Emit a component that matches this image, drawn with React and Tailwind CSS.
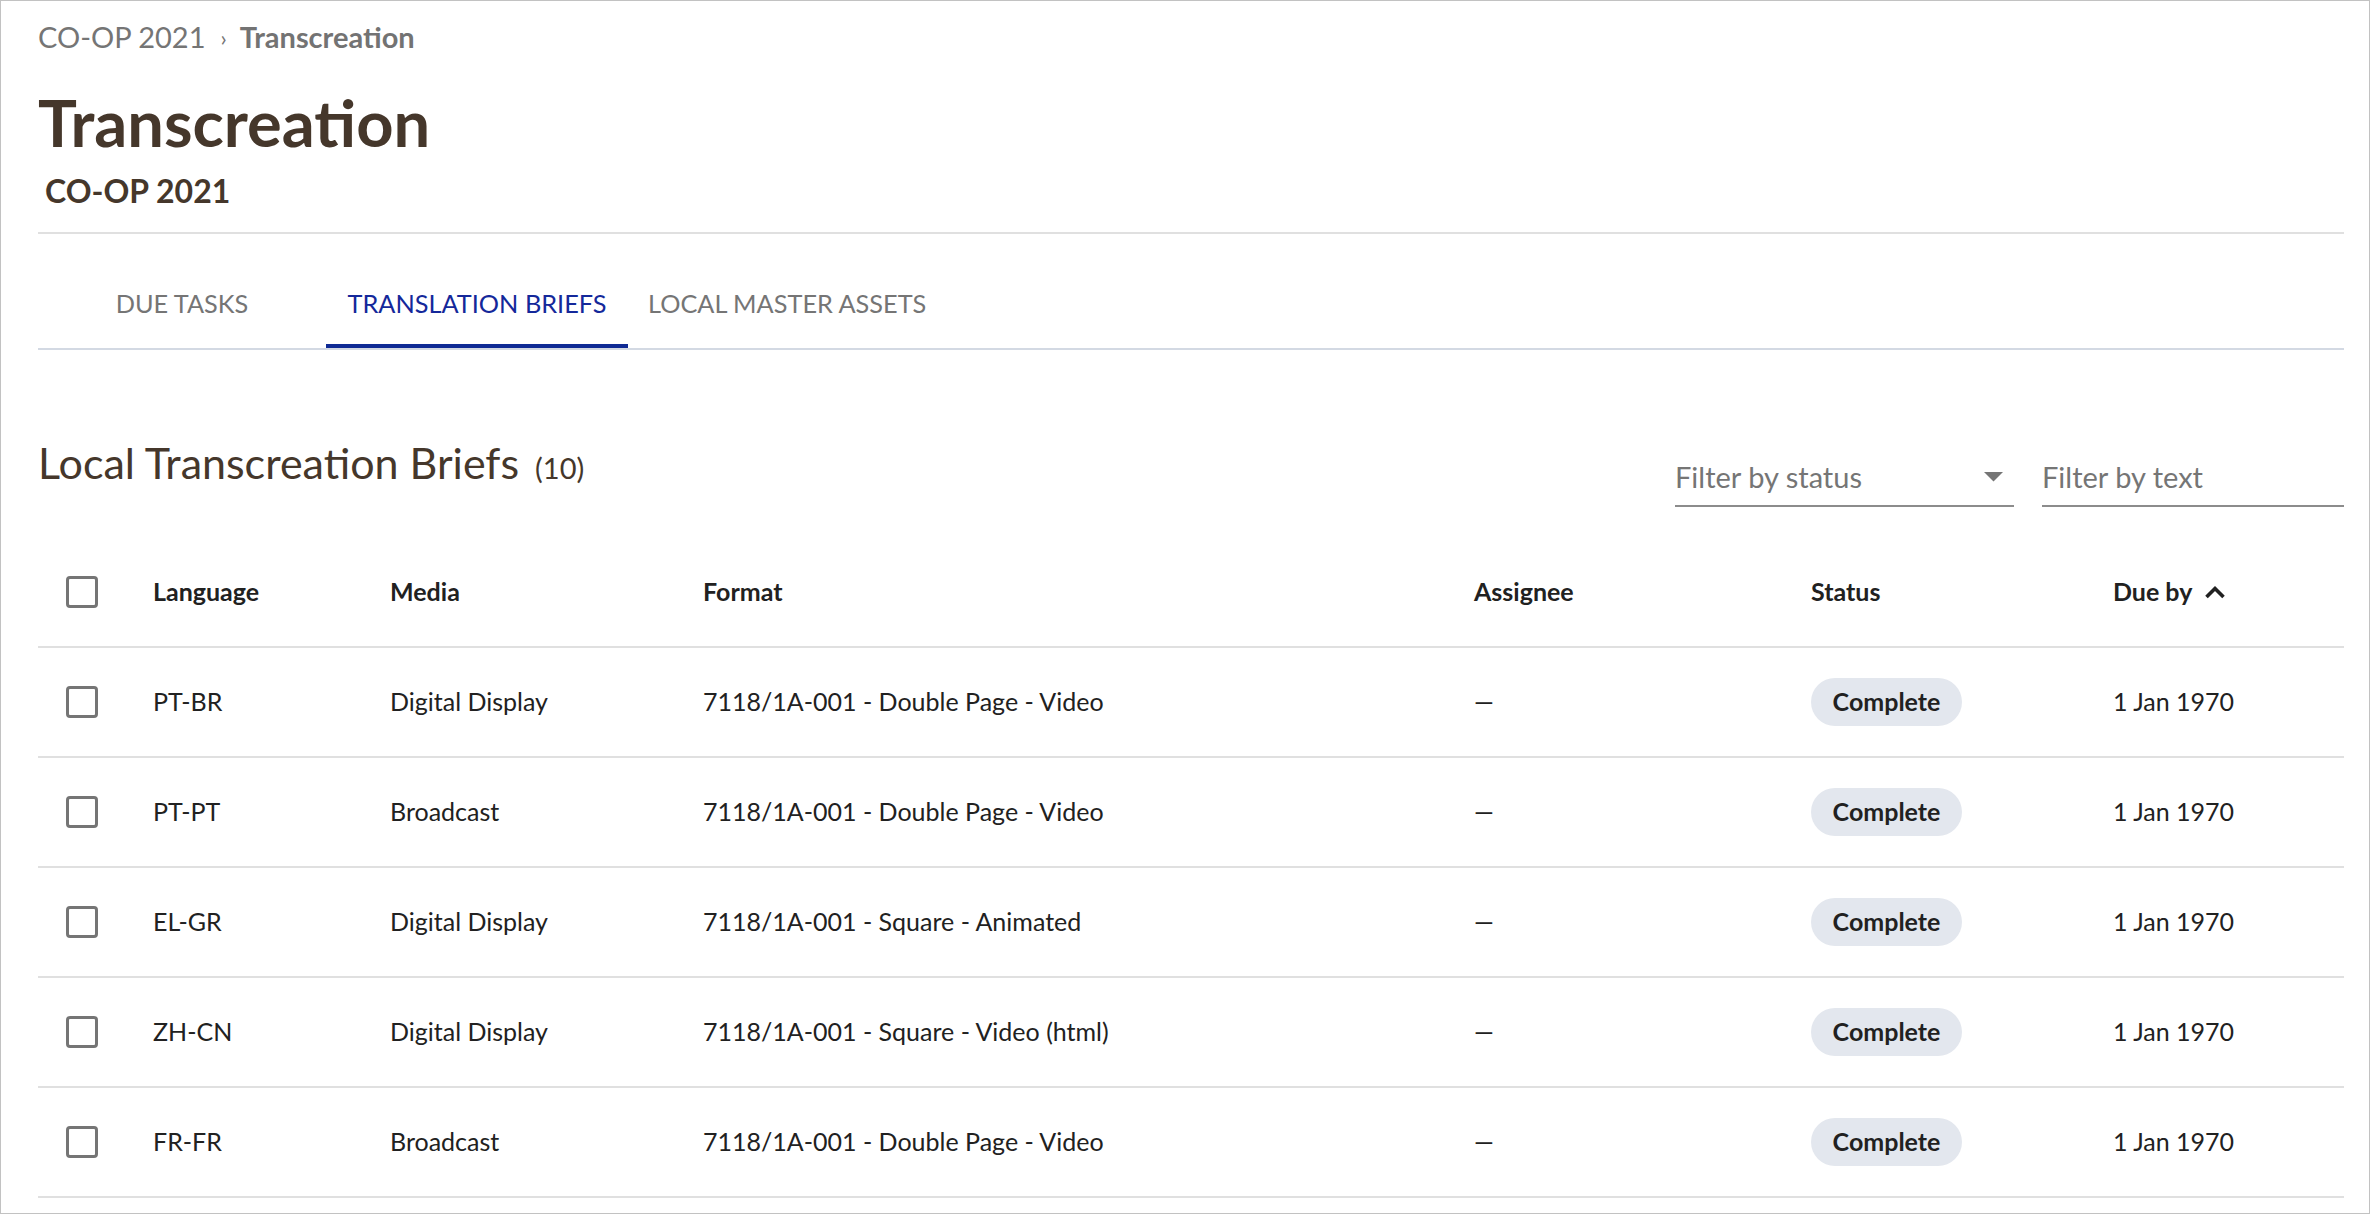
import React from "react";

const rows = [
  { lang: "PT-BR", media: "Digital Display", format: "7118/1A-001 - Double Page - Video" },
  { lang: "PT-PT", media: "Broadcast", format: "7118/1A-001 - Double Page - Video" },
  { lang: "EL-GR", media: "Digital Display", format: "7118/1A-001 - Square - Animated" },
  { lang: "ZH-CN", media: "Digital Display", format: "7118/1A-001 - Square - Video (html)" },
  { lang: "FR-FR", media: "Broadcast", format: "7118/1A-001 - Double Page - Video" },
];

const grid = "grid grid-cols-[115px_237px_313px_771px_337px_302px_230px] items-center";

function Checkbox() {
  return <div className="ml-[28px] h-[32px] w-[32px] rounded-[4px] border-[3px] border-[#757575] box-border" />;
}

export default function App() {
  return (
    <div
      className="h-[1214px] w-full box-border overflow-hidden border border-[#c2c2c2] bg-white pl-[37px] pr-[25px]"
      style={{ fontFamily: "Lato, 'Open Sans', sans-serif" }}
    >
      {/* Breadcrumb */}
      <div className="mt-[16px] flex h-[40px] items-center text-[29px] text-[#757575]">
        <span>CO-OP 2021</span>
        <span className="ml-[15px] mr-[13px] text-[22px]">›</span>
        <span className="font-bold text-[#737373]">Transcreation</span>
      </div>

      {/* Title */}
      <h1 className="mt-[33px] h-[65px] text-[65px] font-bold leading-none text-[#45372b]">
        Transcreation
      </h1>
      <div className="ml-[7px] mt-[20px] h-[32px] text-[32px] font-bold leading-none text-[#45372b]">
        CO-OP 2021
      </div>

      <div className="mt-[25px] h-[2px] bg-[#e0e0e0]" />

      {/* Tabs */}
      <div className="mt-[26px] flex border-b-2 border-[#d3d9e3]">
        <div className="relative flex h-[88px] w-[288px] items-center justify-center text-[25.3px] uppercase text-[#757575]">
          Due Tasks
        </div>
        <div className="relative flex h-[88px] w-[302px] items-center justify-center text-[25.3px] uppercase text-[#14289a]">
          Translation Briefs
          <div className="absolute bottom-0 left-0 right-0 h-[4px] bg-[#0f2a94]" />
        </div>
        <div className="relative flex h-[88px] items-center px-[20px] text-[25.3px] uppercase text-[#757575]">
          Local Master Assets
        </div>
      </div>

      {/* Section header */}
      <div className="mt-[91px] flex items-start justify-between">
        <div className="flex h-[43px] items-baseline leading-none text-[#45372b]">
          <span className="text-[43px]">Local Transcreation Briefs</span>
          <span className="ml-[16px] text-[29px]">(10)</span>
        </div>
        <div className="mt-[21px] flex items-start">
          <div className="flex w-[339px] items-center justify-between border-b-2 border-[#8c8c8c] pb-[14px]">
            <span className="h-[29px] text-[29px] leading-none text-[#757575]">Filter by status</span>
            <svg width="19" height="10" viewBox="0 0 19 10" className="mr-[11px]">
              <path d="M0 0 L19 0 L9.5 9.5 Z" fill="#757575" />
            </svg>
          </div>
          <div className="ml-[28px] w-[302px] border-b-2 border-[#8c8c8c] pb-[14px]">
            <span className="block h-[29px] text-[29px] leading-none text-[#757575]">Filter by text</span>
          </div>
        </div>
      </div>

      {/* Table */}
      <div className="mt-[31px] text-[25px] text-[#212121]">
        <div className={`${grid} h-[110px] border-b-2 border-[#e0e0e0] font-bold`}>
          <div><Checkbox /></div>
          <div>Language</div>
          <div>Media</div>
          <div>Format</div>
          <div>Assignee</div>
          <div>Status</div>
          <div className="flex items-center">
            Due by
            <svg width="22" height="14" viewBox="0 0 22 14" className="ml-[12px]">
              <path d="M2.5 12 L11 3.5 L19.5 12" fill="none" stroke="#212121" strokeWidth="3.6" />
            </svg>
          </div>
        </div>
        {rows.map((r, i) => (
          <div key={i} className={`${grid} h-[110px] border-b-2 border-[#e0e0e0]`}>
            <div><Checkbox /></div>
            <div>{r.lang}</div>
            <div>{r.media}</div>
            <div>{r.format}</div>
            <div>—</div>
            <div>
              <span className="flex h-[48px] w-[151px] items-center justify-center rounded-full bg-[#e3e7ee] font-bold">
                Complete
              </span>
            </div>
            <div>1 Jan 1970</div>
          </div>
        ))}
      </div>
    </div>
  );
}
